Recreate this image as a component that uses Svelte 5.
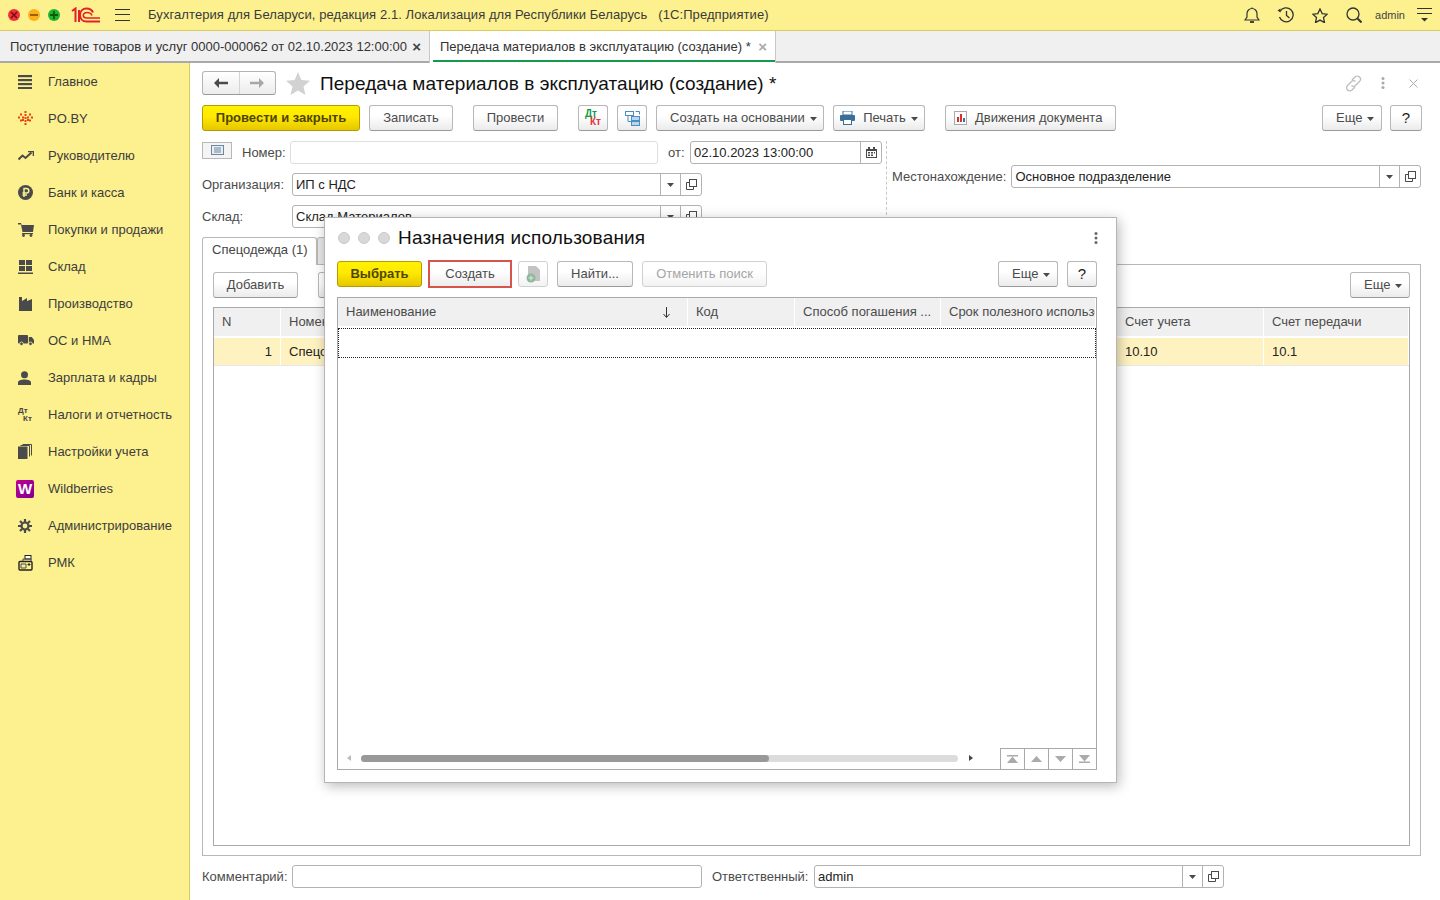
<script>
  const menu = [
    ['list', 'Главное'], ['po', 'PO.BY'], ['trend', 'Руководителю'], ['rub', 'Банк и касса'],
    ['cart', 'Покупки и продажи'], ['store', 'Склад'], ['factory', 'Производство'], ['truck', 'ОС и НМА'],
    ['user', 'Зарплата и кадры'], ['dtkt', 'Налоги и отчетность'], ['pages', 'Настройки учета'],
    ['wb', 'Wildberries'], ['gear', 'Администрирование'], ['rmk', 'РМК']
  ];
  const poDots = [[6.500,0],[2,2.500],[11,2.500],[6.500,3],[0,5.500],[4,5.500],[9,5.500],[13,5.500],[6.500,6],[2,8.500],[11,8.500],[4,8],[9,8],[6.500,9],[6.500,12]];
</script>

{#snippet drop()}
  <svg class="drop" width="7" height="4" viewBox="0 0 7 4"><path d="M0 0h7L3.500 4z" fill="#4a4a4a"/></svg>
{/snippet}
{#snippet kebab(color)}
  <svg width="4" height="14" viewBox="0 0 4 14" fill={color}><circle cx="2" cy="2.500" r="1.500"/><circle cx="2" cy="7" r="1.500"/><circle cx="2" cy="11.500" r="1.500"/></svg>
{/snippet}
{#snippet fieldBtns()}
  <span class="fbtn"><svg width="7" height="4" viewBox="0 0 7 4"><path d="M0 0h7L3.500 4z" fill="#4a4a4a"/></svg></span>
  <span class="fbtn open"><svg width="11" height="11" viewBox="0 0 11 11" fill="none" stroke="#4a4a4a"><rect x="3.500" y="0.500" width="7" height="7" fill="#fff"/><path d="M3.500 3.500H.5v7h7v-3"/></svg></span>
{/snippet}
{#snippet navIcon(k)}
  {#if k === 'list'}
    <svg width="14" height="14" viewBox="0 0 14 14" fill="#4a4a4a"><rect y="0" width="14" height="2.200"/><rect y="4" width="14" height="2.200"/><rect y="8" width="14" height="2.200"/><rect y="12" width="14" height="2.200"/></svg>
  {:else if k === 'po'}
    <svg width="15" height="15" viewBox="0 0 15 15" fill="#e8420f">{#each poDots as d}<rect x={d[0]} y={d[1]} width="2" height="2"/>{/each}</svg>
  {:else if k === 'trend'}
    <svg width="16" height="10" viewBox="0 0 16 10" fill="none" stroke="#4a4a4a" stroke-width="2"><path d="M0.500 8.500l4-4 3 2.500 6-5.500"/><path d="M10 .5h5.500V5" stroke-width="1.600"/></svg>
  {:else if k === 'rub'}
    <svg width="15" height="15" viewBox="0 0 15 15"><circle cx="7.500" cy="7.500" r="7.500" fill="#4a4a4a"/><path d="M6 12V3.500h2.500a2.300 2.300 0 010 4.600H4.500M4.500 10H9" fill="none" stroke="#fcf08f" stroke-width="1.500"/></svg>
  {:else if k === 'cart'}
    <svg width="16" height="14" viewBox="0 0 16 14" fill="#4a4a4a"><path d="M0 0h3l.7 2H16l-1 7H4.500L3 1.500H0z"/><rect x="4" y="10" width="11" height="1.200"/><circle cx="5.500" cy="12.500" r="1.400"/><circle cx="13" cy="12.500" r="1.400"/></svg>
  {:else if k === 'store'}
    <svg width="15" height="14" viewBox="0 0 15 14" fill="#4a4a4a"><rect x="1" width="6" height="5"/><rect x="8" width="6" height="5"/><rect x="1" y="6" width="6" height="5"/><rect x="8" y="6" width="6" height="5"/><rect y="12.500" width="15" height="1.500"/></svg>
  {:else if k === 'factory'}
    <svg width="15" height="14" viewBox="0 0 15 14" fill="#4a4a4a"><path d="M1 0h3v4l5-3v3l5-2v12H1z"/></svg>
  {:else if k === 'truck'}
    <svg width="16" height="11" viewBox="0 0 16 11" fill="#4a4a4a"><rect width="10" height="8.500" rx="1"/><path d="M10.800 2h3l2.200 3v3.500h-5.200z"/><circle cx="3.500" cy="8.800" r="1.800" stroke="#fcf08f" stroke-width=".8"/><circle cx="12.500" cy="8.800" r="1.800" stroke="#fcf08f" stroke-width=".8"/></svg>
  {:else if k === 'user'}
    <svg width="13" height="14" viewBox="0 0 13 14" fill="#4a4a4a"><circle cx="6.500" cy="3.700" r="3.500"/><path d="M0 14v-2.500C0 9.500 3 8.500 6.500 8.500s6.500 1 6.500 3V14z"/></svg>
  {:else if k === 'dtkt'}
    <span class="dk"><b>Дт</b><b class="kt">Кт</b></span>
  {:else if k === 'pages'}
    <svg width="14" height="15" viewBox="0 0 14 15" fill="none" stroke="#4a4a4a"><rect x="0" y="2.500" width="9.500" height="12.500" fill="#4a4a4a" stroke="none"/><path d="M2.500 1.500h9v11M4.500.5h9v11"/></svg>
  {:else if k === 'wb'}
    <span class="wb">W</span>
  {:else if k === 'gear'}
    <svg width="14" height="14" viewBox="0 0 14 14" fill="none" stroke="#4a4a4a"><circle cx="7" cy="7" r="3.500" stroke-width="2.200"/><path d="M7 0v3M7 11v3M0 7h3M11 7h3M2 2l2 2M10 10l2 2M12 2l-2 2M4 10l-2 2" stroke-width="2.200"/></svg>
  {:else if k === 'rmk'}
    <svg width="15" height="16" viewBox="0 0 15 16" fill="none" stroke="#222"><rect x="1" y="6.500" width="13" height="8.500" rx="1" fill="#fcf08f" stroke-width="1.400"/><rect x="7" y="0.500" width="6" height="3.500" fill="#fff"/><path d="M3 9h5v4H3zM5 6V4h8v2" stroke="#4a4a4a"/><path d="M10 9h2v1h-2z" fill="#4a4a4a"/></svg>
  {/if}
{/snippet}

<div class="app">
  <header class="top">
    <span class="light red"><svg width="8" height="8" viewBox="0 0 8 8" stroke="#7a1010" stroke-width="1.600"><path d="M1 1l6 6M7 1L1 7"/></svg></span>
    <span class="light amber"><svg width="8" height="8" viewBox="0 0 8 8" stroke="#8a5a00" stroke-width="1.800"><path d="M0 4h8"/></svg></span>
    <span class="light green"><svg width="8" height="8" viewBox="0 0 8 8" stroke="#0a5a10" stroke-width="1.800"><path d="M0 4h8M4 0v8"/></svg></span>
    <svg class="logo" width="30" height="16" viewBox="0 0 30 16" fill="none" stroke="#e3202a" stroke-width="2"><path d="M1 4l3.500-2.500V15M8 15V3"/><path d="M22 5.500C21 3 18.500 1.500 15.500 1.500c-4 0-6.500 2.800-6.500 6.500s2.500 6.500 6.500 6.500H29"/><path d="M21 8.500c-.5-1.500-2.500-3-5-3-2.300 0-3.700 1.300-3.700 2.800s1.500 2.700 3.700 2.700h13" stroke-width="1.600"/></svg>
    <svg class="burger" width="15" height="12" viewBox="0 0 15 12" stroke="#333"><path d="M0 .5h15M0 5.500h15M0 11.500h15"/></svg>
    <span class="apptitle">Бухгалтерия для Беларуси, редакция 2.1. Локализация для Республики Беларусь&nbsp;&nbsp;&nbsp;(1С:Предприятие)</span>
    <span class="topicons">
      <svg width="16" height="17" viewBox="0 0 16 17" fill="none" stroke="#333" stroke-width="1.200"><path d="M1 13h14l-2-3V6.500a5 5 0 00-10 0V10zM8 1.500V.5"/><path d="M6 15h4" stroke-width="1.800"/></svg>
      <svg width="18" height="16" viewBox="0 0 18 16" fill="none" stroke="#333" stroke-width="1.300"><path d="M3 4.500A7 7 0 112.500 10"/><path d="M9.500 4v4.500l3 2.500"/><path d="M0.500 3.500l3-2v4z" fill="#333" stroke="none"/></svg>
      <svg class="tstar" width="16" height="15" viewBox="0 0 16 15" fill="none" stroke="#333" stroke-width="1.300"><path d="M8 1l2.200 4.600 5 .6-3.700 3.400 1 5L8 12.100 3.500 14.600l1-5L.8 6.200l5-.6z"/></svg>
      <svg width="16" height="16" viewBox="0 0 16 16" fill="none" stroke="#333" stroke-width="1.300"><circle cx="7" cy="7" r="6"/><path d="M11.500 11.500l4 4" stroke-width="2"/></svg>
      <span class="admin">admin</span>
      <svg width="15" height="14" viewBox="0 0 15 14" stroke="#333"><path d="M0 .5h15M0 5.500h15"/><path d="M4 10h7l-3.500 3.500z" fill="#333" stroke="none"/></svg>
    </span>
  </header>

  <nav class="tabs">
    <div class="wtab first"><span>Поступление товаров и услуг 0000-000062 от 02.10.2023 12:00:00</span><span class="x">×</span></div>
    <div class="wtab active"><span>Передача материалов в эксплуатацию (создание) *</span><span class="x light-x">×</span></div>
  </nav>

  <div class="body">
    <aside class="side">
      {#each menu as m}
        <div class="item"><span class="ico">{@render navIcon(m[0])}</span><span>{m[1]}</span></div>
      {/each}
    </aside>

    <main class="main">
      <div class="head">
        <div class="navpair">
          <span><svg width="14" height="10" viewBox="0 0 14 10" fill="#4a4a4a"><path d="M0 5l5-5v3.800h9v2.400H5V10z"/></svg></span>
          <span><svg width="14" height="10" viewBox="0 0 14 10" fill="#a8a8a8"><path d="M14 5L9 0v3.800H0v2.400h9V10z"/></svg></span>
        </div>
        <svg class="bigstar" width="24" height="23" viewBox="0 0 24 23" fill="#d2d2d2"><path d="M12 0l3.400 8 8.600.8-6.500 5.600 2 8.600L12 18.500 4.500 23l2-8.600L0 8.800 8.600 8z"/></svg>
        <h1>Передача материалов в эксплуатацию (создание) *</h1>
        <span class="headright">
          <svg width="17" height="17" viewBox="0 0 17 17" fill="none" stroke="#bdbdbd" stroke-width="1.300"><path d="M7 5l3-3a3 3 0 014.500 4.500l-4 4a3 3 0 01-4 0"/><path d="M10 12l-3 3a3 3 0 01-4.500-4.500l4-4a3 3 0 014 0"/></svg>
          <span class="hkebab">{@render kebab('#aaa')}</span>
          <svg width="9" height="9" viewBox="0 0 9 9" stroke="#aaa"><path d="M.5.500l8 8M8.500.500l-8 8"/></svg>
        </span>
      </div>

      <div class="toolbar">
        <button class="btn yellow w158">Провести и закрыть</button>
        <button class="btn w84">Записать</button>
        <button class="btn w85 ml11">Провести</button>
        <button class="btn w30 ml11 dt"><span class="g">Дт</span><span class="r">Кт</span></button>
        <button class="btn w30"><svg width="15" height="15" viewBox="0 0 15 15" fill="none" stroke="#4a8fc2"><rect x=".5" y=".5" width="8" height="4"/><rect x="6.500" y="5.500" width="8" height="4" fill="#bcd5ea"/><rect x="6.500" y="10.500" width="8" height="4" fill="#bcd5ea"/><path d="M3 4.500v6h3.500M10.500 .5h4v3"/></svg></button>
        <button class="btn w168 left">Создать на основании{@render drop()}</button>
        <button class="btn w92"><svg class="pr" width="15" height="14" viewBox="0 0 15 14"><rect x="3" y="0" width="9" height="4" fill="#fff" stroke="#3a6f9c"/><rect y="4" width="15" height="6" rx="1" fill="#3a6f9c"/><rect x="3.500" y="8.500" width="8" height="5" fill="#fff" stroke="#3a6f9c"/></svg>Печать{@render drop()}</button>
        <button class="btn w171 ml11 move"><svg class="pr" width="13" height="14" viewBox="0 0 13 14"><rect x=".5" y=".5" width="12" height="13" fill="#fff" stroke="#aaa"/><rect x="3" y="6" width="2" height="5" fill="#d9302a"/><rect x="6" y="3" width="2" height="8" fill="#d9302a"/><rect x="9" y="7" width="2" height="4" fill="#3a6f9c"/></svg>Движения документа</button>
        <button class="btn w60 push left">Еще{@render drop()}</button>
        <button class="btn w32 q tq">?</button>
      </div>

      <div class="form">
        <div class="fcol">
          <div class="row r1">
            <span class="listbtn"><svg width="13" height="10" viewBox="0 0 13 10" stroke="#6d87a0" fill="none"><rect x=".5" y=".5" width="12" height="9" fill="#e9eef3"/><path d="M3 3h7M3 5h7M3 7h7"/></svg></span>
            <span class="lab l-num">Номер:</span>
            <span class="field soft w368"></span>
            <span class="lab l-ot">от:</span>
            <span class="field w192 date"><span class="ftext">02.10.2023 13:00:00</span><span class="fbtn open"><svg width="11" height="11" viewBox="0 0 11 11" fill="#4a4a4a"><path d="M0 2h11v9H0zM1 4v6h9V4z"/><rect x="2" y="0" width="2" height="3"/><rect x="7" y="0" width="2" height="3"/><rect x="2" y="5" width="2" height="1.500"/><rect x="5" y="5" width="2" height="1.500"/><rect x="8" y="5" width="1" height="1.500"/><rect x="2" y="7.500" width="2" height="1.500"/><rect x="5" y="7.500" width="2" height="1.500"/></svg></span></span>
          </div>
          <div class="row r2">
            <span class="lab w90">Организация:</span>
            <span class="field w410"><span class="ftext">ИП с НДС</span>{@render fieldBtns()}</span>
          </div>
          <div class="row r3">
            <span class="lab w90">Склад:</span>
            <span class="field w410"><span class="ftext">Склад Материалов</span>{@render fieldBtns()}</span>
          </div>
        </div>
        <div class="dash"></div>
        <div class="rcol">
          <span class="lab">Местонахождение:</span>
          <span class="field w410"><span class="ftext">Основное подразделение</span>{@render fieldBtns()}</span>
        </div>
      </div>

      <div class="ptabs">
        <div class="ptab">Спецодежда (1)</div>
        <div class="ptab off">Дополнительно</div>
      </div>
      <section class="panel">
        <div class="ptools">
          <button class="btn w85">Добавить</button>
          <button class="btn w85 ml20">Подбор</button>
          <button class="btn w60 push left">Еще{@render drop()}</button>
        </div>
        <div class="grid bg">
          <div class="hrow">
            <div class="hc">N</div><div class="hc">Номенклатура</div><div class="hc">Счет учета</div><div class="hc">Счет передачи</div>
          </div>
          <div class="drow">
            <div class="dc num">1</div><div class="dc">Спецодежда</div><div class="dc">10.10</div><div class="dc">10.1</div>
          </div>
        </div>
      </section>

      <div class="bottom">
        <span class="lab w90">Комментарий:</span>
        <span class="field w410"></span>
        <span class="lab l-resp">Ответственный:</span>
        <span class="field w410"><span class="ftext">admin</span>{@render fieldBtns()}</span>
      </div>
    </main>
  </div>

  <div class="modal">
    <div class="mhead">
      <span class="dot"></span><span class="dot"></span><span class="dot"></span>
      <h2>Назначения использования</h2>
      <span class="mkebab">{@render kebab('#666')}</span>
    </div>
    <div class="mtools">
      <button class="btn yellow w85">Выбрать</button>
      <button class="btn w84 focus">Создать</button>
      <button class="btn w30 dim"><svg width="14" height="17" viewBox="0 0 14 17"><path d="M2 0h8l4 4v11H2z" fill="#c3c3c3"/><circle cx="5" cy="12" r="4.500" fill="#8fb79c"/><path d="M5 9.500v5M2.500 12h5" stroke="#dfe9e2"/></svg></button>
      <button class="btn w76">Найти...</button>
      <button class="btn w125 dim txt">Отменить поиск</button>
      <button class="btn w60 push left">Еще{@render drop()}</button>
      <button class="btn w30 q">?</button>
    </div>
    <div class="mtable">
      <div class="mhrow">
        <div class="hc name">Наименование<svg width="7" height="11" viewBox="0 0 7 11" fill="none" stroke="#333"><path d="M3.500 0v10M.5 7l3 3.500 3-3.500"/></svg></div>
        <div class="hc">Код</div>
        <div class="hc">Способ погашения ...</div>
        <div class="hc clip">Срок полезного использования</div>
      </div>
      <div class="focusrow"></div>
      <div class="mfill"></div>
      <div class="mfoot">
        <span class="sarrow"><svg width="4" height="6" viewBox="0 0 4 6" fill="#bbb"><path d="M4 0v6L0 3z"/></svg></span>
        <div class="track"><div class="thumb"></div></div>
        <span class="sarrow"><svg width="4" height="6" viewBox="0 0 4 6" fill="#444"><path d="M0 0v6l4-3z"/></svg></span>
        <div class="pager">
          <span><svg width="11" height="8" viewBox="0 0 11 8" fill="#aaa"><path d="M0 0h11v1.500H0zM5.500 1.500L11 8H0z"/></svg></span>
          <span><svg width="11" height="6" viewBox="0 0 11 6" fill="#aaa"><path d="M5.500 0L11 6H0z"/></svg></span>
          <span><svg width="11" height="6" viewBox="0 0 11 6" fill="#aaa"><path d="M0 0h11L5.500 6z"/></svg></span>
          <span><svg width="11" height="8" viewBox="0 0 11 8" fill="#aaa"><path d="M0 0h11L5.500 6.500zM0 6.500h11V8H0z"/></svg></span>
        </div>
      </div>
    </div>
  </div>
</div>

<style>
  :global(body) { margin: 0; background: #fff; }
  .app { position: relative; width: 1440px; height: 900px; overflow: hidden; display: flex; flex-direction: column; font: 13px/16px "Liberation Sans", Arial, sans-serif; color: #4b4b4b; background: #fff; }
  button { font: inherit; color: inherit; }
  h1, h2 { margin: 0; font-weight: 400; color: #111; font-size: 19px; line-height: 24px; letter-spacing: .05px; }
  h2 { letter-spacing: .18px; }

  .top { height: 30px; background: #fcf08f; border-bottom: 1px solid #d9cb63; display: flex; align-items: center; padding-left: 8px; flex: none; }
  .light { width: 12px; height: 12px; border-radius: 50%; display: flex; align-items: center; justify-content: center; margin-right: 8px; }
  .light.red { background: #f0323a; }
  .light.amber { background: #fbb01c; }
  .light.green { background: #1fb42d; }
  .logo { margin-left: 3px; }
  .burger { margin-left: 14px; }
  .apptitle { margin-left: 18px; color: #3a3a3a; white-space: pre; letter-spacing: .08px; }
  .topicons { margin-left: auto; display: flex; align-items: center; padding-right: 8px; gap: 17px; }
  .tstar { margin-right: 1px; }
  .admin { font-size: 11px; margin-left: -4px; margin-right: -5px; color: #444; }

  .tabs { background: #f0f0f0; border-bottom: 2px solid #a9a9a9; display: flex; flex: none; height: 30px; }
  .wtab { display: flex; align-items: center; white-space: nowrap; padding: 1px 8px 0 10px; color: #333; box-sizing: content-box; }
  .wtab.first { width: 411px; justify-content: space-between; }
  .wtab.active { width: 327px; justify-content: space-between; background: #fff; border-left: 1px solid #c8c8c8; border-right: 1px solid #c8c8c8; position: relative; height: 32px; padding-top: 0; }
  .wtab.active::after { content: ""; position: absolute; left: 3px; right: 0; bottom: 1px; height: 2px; background: #159a4d; }
  .x { font-size: 15px; font-weight: 700; color: #444; }
  .light-x { color: #aaa; }

  .body { flex: 1; display: flex; min-height: 0; }
  .side { width: 189px; background: #fcf08f; border-right: 1px solid #d9cb63; flex: none; }
  .item { height: 37px; display: flex; align-items: center; color: #3d3d3d; }
  .ico { width: 48px; display: flex; align-items: center; justify-content: flex-start; box-sizing: border-box; padding-left: 18px; flex: none; }
  .dk { display: flex; flex-direction: column; font-size: 8px; line-height: 8px; color: #444; }
  .dk b { font-weight: 700; }
  .dk .kt { margin-left: 5px; }
  .wb { width: 18px; height: 18px; margin-left: -2px; background: linear-gradient(135deg, #c2008f, #7c0094); color: #fff; font: 700 15px/18px "Liberation Sans", sans-serif; text-align: center; border-radius: 2px; }

  .main { flex: 1; display: flex; flex-direction: column; padding: 8px 19px 0 12px; min-width: 0; }
  .head { height: 24px; display: flex; align-items: center; flex: none; }
  .navpair { width: 74px; height: 24px; box-sizing: border-box; display: flex; border: 1px solid #b4b4b4; border-bottom-color: #999; border-radius: 3px; background: linear-gradient(#fff, #ececec); }
  .navpair span { flex: 1; display: flex; align-items: center; justify-content: center; }
  .navpair span + span { border-left: 1px solid #d4d4d4; }
  .bigstar { margin-left: 10px; }
  .head h1 { margin-left: 10px; padding-top: 1px; }
  .headright { margin-left: auto; display: flex; align-items: center; gap: 22px; padding-right: 3px; }
  .hkebab { display: flex; margin-left: -3px; margin-right: 2px; }

  .toolbar { display: flex; gap: 9px; margin-top: 10px; margin-right: -1px; height: 26px; flex: none; }
  .btn { height: 26px; box-sizing: border-box; border: 1px solid #b8b8b8; border-bottom-color: #9a9a9a; border-radius: 3px; background: linear-gradient(#fff 40%, #ebebeb); display: inline-flex; align-items: center; justify-content: center; padding: 0; white-space: nowrap; color: #4b4b4b; flex: none; }
  .left { justify-content: flex-start; padding-left: 13px; }
  .move { justify-content: flex-start; padding-left: 8px; }
  .yellow { background: linear-gradient(#fff200, #ffe900 45%, #e6c600); border-color: #b49c00; color: #4d4500; font-weight: 700; }
  .w158 { width: 158px; } .w84 { width: 84px; } .w85 { width: 85px; } .w30 { width: 30px; } .w168 { width: 168px; }
  .w92 { width: 92px; } .w171 { width: 171px; } .w60 { width: 60px; } .w32 { width: 32px; } .w76 { width: 76px; } .w125 { width: 125px; }
  .ml11 { margin-left: 11px; } .ml20 { margin-left: 20px; }
  .push { margin-left: auto; }
  .q { color: #222; font-size: 15px; }
  .tq { margin-left: -1px; }
  .drop { margin-left: 5px; margin-top: 2px; }
  .pr { margin-right: 8px; }
  .dt { position: relative; font-size: 10px; line-height: 8px; font-weight: 700; }
  .dt .g { position: absolute; left: 6px; top: 4px; color: #0d9b4c; }
  .dt .r { position: absolute; left: 11px; top: 12px; color: #e8323c; }

  .form { display: flex; margin-top: 10px; height: 74px; flex: none; }
  .fcol { width: 680px; flex: none; position: relative; }
  .row { display: flex; align-items: center; height: 23px; }
  .r2, .r3 { margin-top: 9px; }
  .lab { white-space: nowrap; color: #4b4b4b; }
  .listbtn { width: 30px; height: 17px; box-sizing: border-box; border: 1px solid #b8b8b8; background: #f4f4f4; display: flex; align-items: center; justify-content: center; margin-top: -5px; }
  .l-num { margin-left: 10px; width: 48px; }
  .l-ot { margin-left: 10px; width: 22px; }
  .w90 { width: 90px; flex: none; }
  .field { height: 23px; box-sizing: border-box; border: 1px solid #b2b2b2; border-radius: 3px; background: #fff; display: flex; align-items: center; flex: none; color: #222; }
  .field.soft { border-color: #dedede; }
  .w368 { width: 368px; }
  .w192 { width: 192px; }
  .w410 { width: 410px; }
  .ftext { flex: 1; padding-left: 3px; white-space: nowrap; font-size: 13px; }
  .fbtn { width: 20px; height: 100%; box-sizing: border-box; border-left: 1px solid #b2b2b2; display: flex; align-items: center; justify-content: center; flex: none; }
  .fbtn.open { width: 21px; }
  .dash { width: 0; border-left: 1px dashed #c8c8c8; margin-left: 4px; height: 74px; }
  .rcol { display: flex; align-items: center; gap: 6px; margin-left: 5px; height: 23px; margin-top: 24px; }
  .rcol .field { margin-left: -1px; }

  .ptabs { display: flex; margin-top: 22px; height: 27px; flex: none; position: relative; }
  .ptab { width: 115px; box-sizing: border-box; height: 28px; border: 1px solid #b8b8b8; border-bottom: 0; border-radius: 3px 3px 0 0; background: #fff; padding: 4px 0 0 9px; color: #444; position: relative; z-index: 1; }
  .ptab.off { width: 130px; background: #e6e6e6; height: 27px; }
  .panel { border: 1px solid #b8b8b8; height: 592px; box-sizing: border-box; padding: 7px 10px 8px; flex: none; display: flex; flex-direction: column; }
  .ptools { display: flex; height: 26px; flex: none; }
  .grid.bg { margin-top: 9px; height: 539px; flex: none; box-sizing: border-box; border: 1px solid #a9a9a9; }
  .hrow, .drow { display: grid; grid-template-columns: 67px 836px 147px 1fr; }
  .hrow { height: 29px; }
  .hc { background: #f0f0f0; border-right: 1px solid #fff; border-bottom: 1px solid #fff; padding-left: 8px; display: flex; align-items: center; white-space: nowrap; overflow: hidden; box-sizing: border-box; color: #4b4b4b; }
  .drow { height: 27px; margin-top: 1px; background: #fef2c0; border-bottom: 1px solid #e6e6e6; }
  .dc { padding-left: 8px; border-right: 1px solid #fff; display: flex; align-items: center; color: #222; }
  .dc.num { justify-content: flex-end; padding-right: 8px; }

  .bottom { display: flex; align-items: center; margin-top: 9px; height: 23px; flex: none; }
  .l-resp { margin-left: 10px; width: 102px; }

  .modal { position: absolute; z-index: 5; left: 324px; top: 217px; width: 793px; height: 566px; box-sizing: border-box; background: #fff; border: 1px solid #b5b5b5; box-shadow: 2px 3px 12px rgba(0,0,0,.28); padding: 0 19px 12px 12px; display: flex; flex-direction: column; }
  .mhead { display: flex; align-items: center; height: 40px; padding-left: 1px; gap: 8px; flex: none; }
  .dot { width: 12px; height: 12px; border-radius: 50%; background: #d8d8d8; border: 1px solid #cbcbcb; box-sizing: border-box; }
  .mkebab { margin-left: auto; margin-right: -1px; display: flex; }
  .mtools { display: flex; gap: 9px; height: 26px; margin-top: 3px; flex: none; }
  .focus { outline: 2px solid #d6544c; outline-offset: -2px; margin-left: -3px; border-color: #ccc; border-radius: 0; height: 28px; margin-top: -1px; }
  .focus + .dim { margin-left: -3px; }
  .dim { background: linear-gradient(#fff 40%, #f2f2f2); border-color: #d0d0d0; }
  .txt { color: #a5a5a5; }
  .mtable { margin-top: 10px; flex: 1; border: 1px solid #a9a9a9; display: flex; flex-direction: column; min-height: 0; width: 760px; box-sizing: border-box; }
  .mhrow { display: grid; grid-template-columns: 350px 107px 146px 1fr; height: 29px; flex: none; }
  .hc.name { justify-content: space-between; padding-right: 17px; }
  .hc.clip { padding-right: 0; }
  .focusrow { height: 30px; margin-top: 1px; box-sizing: border-box; border: 1px dotted #222; flex: none; }
  .mfill { flex: 1; }
  .mfoot { display: flex; align-items: center; height: 21px; flex: none; position: relative; }
  .sarrow { width: 4px; display: flex; margin-left: 9px; margin-top: -1px; }
  .track { width: 597px; height: 7px; margin-left: 10px; margin-right: 2px; background: #dcdcdc; border-radius: 4px; margin-top: -1px; }
  .thumb { width: 408px; height: 7px; background: #999; border-radius: 4px; }
  .pager { margin-left: auto; display: flex; height: 21px; border-top: 1px solid #a9a9a9; border-left: 1px solid #a9a9a9; box-sizing: border-box; }
  .pager span { width: 24px; display: flex; align-items: center; justify-content: center; border-right: 1px solid #a9a9a9; box-sizing: border-box; }
  .pager span:last-child { border-right: 0; width: 23px; }
</style>
